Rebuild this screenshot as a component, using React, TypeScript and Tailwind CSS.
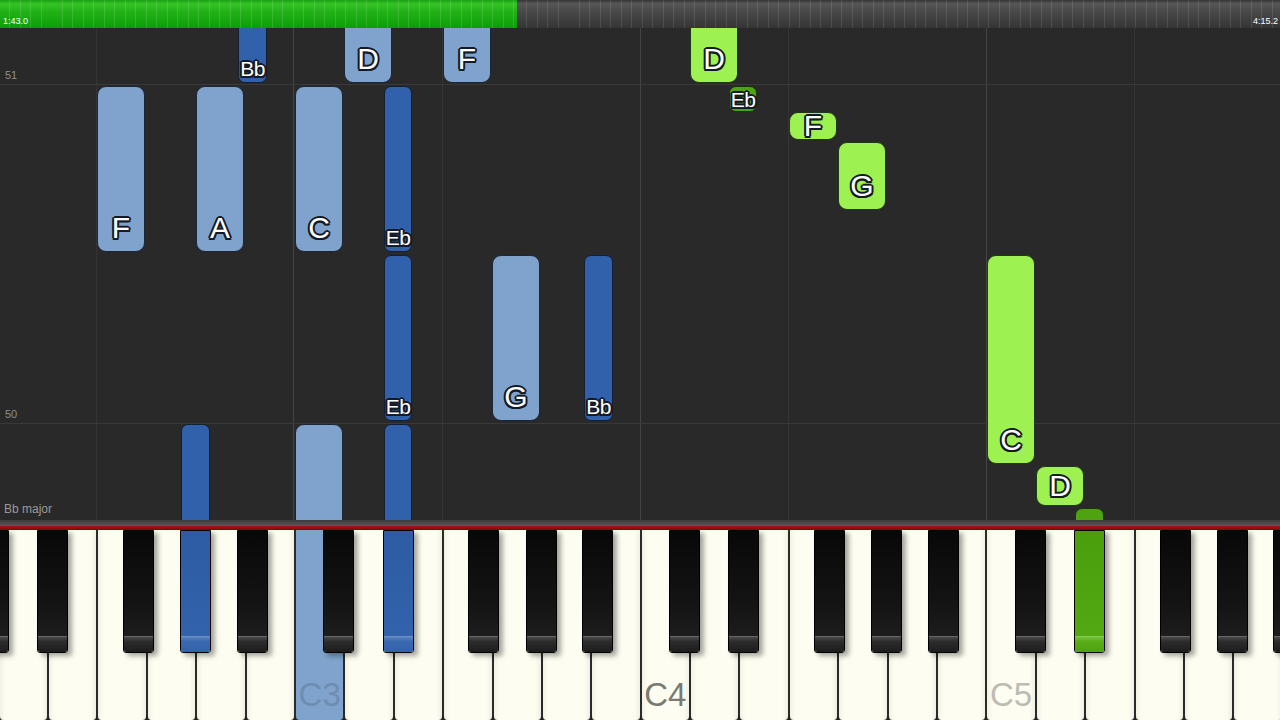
import React from 'react';

type Kind = 'lb' | 'db' | 'lg' | 'dg';

interface Note {
  x: number;
  top: number;
  bottom: number;
  w: number;
  kind: Kind;
  label?: string;
}

// page coordinates, the roll starts at y = 28
const NOTES: Note[] = [
  { x: 238, top: 10, bottom: 83, w: 29, kind: 'db', label: 'Bb' },
  { x: 344, top: 10, bottom: 83, w: 48, kind: 'lb', label: 'D' },
  { x: 443, top: 10, bottom: 83, w: 48, kind: 'lb', label: 'F' },
  { x: 690, top: 10, bottom: 83, w: 48, kind: 'lg', label: 'D' },
  { x: 97, top: 86, bottom: 252, w: 48, kind: 'lb', label: 'F' },
  { x: 196, top: 86, bottom: 252, w: 48, kind: 'lb', label: 'A' },
  { x: 295, top: 86, bottom: 252, w: 48, kind: 'lb', label: 'C' },
  { x: 384, top: 86, bottom: 252, w: 28, kind: 'db', label: 'Eb' },
  { x: 729, top: 86, bottom: 112, w: 28, kind: 'dg', label: 'Eb' },
  { x: 789, top: 112, bottom: 140, w: 48, kind: 'lg', label: 'F' },
  { x: 838, top: 142, bottom: 210, w: 48, kind: 'lg', label: 'G' },
  { x: 384, top: 255, bottom: 421, w: 28, kind: 'db', label: 'Eb' },
  { x: 492, top: 255, bottom: 421, w: 48, kind: 'lb', label: 'G' },
  { x: 584, top: 255, bottom: 421, w: 29, kind: 'db', label: 'Bb' },
  { x: 987, top: 255, bottom: 464, w: 48, kind: 'lg', label: 'C' },
  { x: 1036, top: 466, bottom: 506, w: 48, kind: 'lg', label: 'D' },
  { x: 181, top: 424, bottom: 540, w: 29, kind: 'db' },
  { x: 295, top: 424, bottom: 540, w: 48, kind: 'lb' },
  { x: 384, top: 424, bottom: 540, w: 28, kind: 'db' },
  { x: 1075, top: 508, bottom: 540, w: 29, kind: 'dg' },
];

const NOTE_STYLE: Record<Kind, string> = {
  lb: 'bg-[#7fa3cd] border-[#1b2636]',
  db: 'bg-[#3161aa] border-[#141f33]',
  lg: 'bg-[#9df151] border-[#22361a]',
  dg: 'bg-[#4fa311] border-[#1c330c]',
};

const OUTLINE =
  '[text-shadow:-1.5px_-1.5px_0_#141a26,1.5px_-1.5px_0_#141a26,-1.5px_1.5px_0_#141a26,1.5px_1.5px_0_#141a26,0_-2px_0_#141a26,0_2px_0_#141a26,-2px_0_0_#141a26,2px_0_0_#141a26]';

const V_LINES = [
  { x: 96, strong: false },
  { x: 293, strong: true },
  { x: 442, strong: false },
  { x: 640, strong: true },
  { x: 788, strong: false },
  { x: 986, strong: true },
  { x: 1134, strong: false },
];

const KEY_W = 49.38;
const WHITE = ['D2', 'E2', 'F2', 'G2', 'A2', 'B2', 'C3', 'D3', 'E3', 'F3', 'G3', 'A3', 'B3', 'C4', 'D4', 'E4', 'F4', 'G4', 'A4', 'B4', 'C5', 'D5', 'E5', 'F5', 'G5', 'A5'];
const BLACK_OFFSET: Record<string, number> = { C: -6, D: 4, F: -9, G: -1, A: 6 };

type Hl = 'none' | 'blue' | 'green';
const BLACK_HL: Record<string, Hl> = { G2: 'blue', D3: 'blue', D5: 'green' };

// black keys: boundary index (right edge of a white key) + offset
const BLACK_KEYS: { left: number; hl: Hl }[] = [{ left: 0 * KEY_W + BLACK_OFFSET.C - 15, hl: 'none' }];
WHITE.forEach((name, i) => {
  const pc = name[0];
  if (BLACK_OFFSET[pc] !== undefined) {
    BLACK_KEYS.push({ left: (i + 1) * KEY_W + BLACK_OFFSET[pc] - 15, hl: BLACK_HL[name] ?? 'none' });
  }
});

const BLACK_BODY: Record<Hl, string> = {
  none: 'bg-[linear-gradient(#080808,#141414_70%,#1d1d1d)]',
  blue: 'bg-[linear-gradient(#2d5ca4,#3262ab)]',
  green: 'bg-[linear-gradient(#4a9e0c,#52a913)]',
};
const BLACK_LIP: Record<Hl, string> = {
  none: 'bg-[linear-gradient(#4a4a4a,#2c2c2c_30%,#1c1c1c)] border-[#666]',
  blue: 'bg-[linear-gradient(#5a82c0,#3a69b0_30%,#3162aa)] border-[#6f92c8]',
  green: 'bg-[linear-gradient(#78c23c,#58ad18_30%,#4fa311)] border-[#86cc4c]',
};

const KEY_LABEL: Record<string, string> = {
  C3: 'text-[#6f8db2]',
  C4: 'text-[#7a7a72]',
  C5: 'text-[#bcbcb4]',
};

const NoteBox: React.FC<{ n: Note }> = ({ n }) => {
  const wide = n.w > 40;
  return (
    <div
      className={`absolute flex flex-col justify-end items-center border ${NOTE_STYLE[n.kind]} ${wide ? 'rounded-[9px]' : 'rounded-[7px]'}`}
      style={{ left: n.x, top: n.top - 28, width: n.w, height: n.bottom - n.top }}
    >
      {n.label && (
        <span
          className={`flex items-center justify-center max-h-full text-white leading-none ${OUTLINE} ${
            wide ? 'h-[47px] text-[30px]' : 'h-[27px] text-[21px] tracking-[-0.5px]'
          }`}
        >
          {n.label}
        </span>
      )}
    </div>
  );
};

const App: React.FC = () => {
  return (
    <div className="w-[1280px] h-[720px] overflow-hidden flex flex-col bg-[#292929] font-['Liberation_Sans',Arial,sans-serif]">
      {/* Timeline */}
      <div className="h-[28px] flex shrink-0">
        <div className="w-[517px] flex items-end pl-[3px] pb-[2px] [background-image:repeating-linear-gradient(90deg,transparent_0_9.5px,rgba(255,255,255,0.13)_9.5px_10.5px),linear-gradient(#1a9e12,#34c426_14%,#20b016_45%,#0b9e08)]">
          <span className="text-[9px] leading-none text-white">1:43.0</span>
        </div>
        <div className="flex-1 flex items-end justify-end pb-[2px] pr-[2px] [background-image:repeating-linear-gradient(90deg,transparent_0_9.5px,rgba(255,255,255,0.1)_9.5px_10.5px),linear-gradient(#333,#565656_12%,#474747_45%,#353535)]">
          <span className="text-[9px] leading-none text-white">4:15.2</span>
        </div>
      </div>

      {/* Piano roll */}
      <div className="relative h-[492px] shrink-0 overflow-hidden bg-[#292929]">
        {V_LINES.map((l) => (
          <div
            key={l.x}
            className={`absolute top-0 bottom-0 w-px ${l.strong ? 'bg-[#454545]' : 'bg-[#343434]'}`}
            style={{ left: l.x }}
          />
        ))}
        <div className="absolute left-0 right-0 top-[56px] h-px bg-[#393939]" />
        <div className="absolute left-0 right-0 top-[395px] h-px bg-[#393939]" />
        <span className="absolute left-[5px] top-[42px] text-[11px] leading-none text-[#8e8e8e]">51</span>
        <span className="absolute left-[5px] top-[381px] text-[11px] leading-none text-[#8e8e8e]">50</span>
        <span className="absolute left-[4px] top-[475px] text-[12px] leading-none text-[#9a9a9a]">Bb major</span>

        {NOTES.map((n, i) => (
          <NoteBox key={i} n={n} />
        ))}
      </div>

      {/* Keyboard edge */}
      <div className="h-[6px] shrink-0 bg-[linear-gradient(#3c3c3c,#575757)]" />
      <div className="h-[4px] shrink-0 bg-[linear-gradient(#b01414,#7a0808)]" />

      {/* Keyboard */}
      <div className="relative flex-1 overflow-hidden bg-[#1e1e1e]">
        <div className="relative flex h-full w-[1284px] ml-[-1.4px]">
          {WHITE.map((name) => (
            <div
              key={name}
              className={`flex-1 flex items-end justify-center pb-[9px] border-x-[0.75px] border-[#2a2a2a] rounded-b-[4px] ${
                name === 'C3' ? 'bg-[#7fa3cd]' : 'bg-[linear-gradient(90deg,#f2f2e4,#fdfdf1_12%,#fdfdf1_88%,#f0f0e2)]'
              }`}
            >
              {KEY_LABEL[name] && (
                <span className={`text-[33px] leading-none ${KEY_LABEL[name]}`}>{name}</span>
              )}
            </div>
          ))}
          {BLACK_KEYS.map((b, i) => (
            <div
              key={i}
              className="absolute top-0 h-[123px] w-[31px] flex flex-col border border-black rounded-b-[3px] shadow-[4px_3px_5px_rgba(0,0,0,0.35)]"
              style={{ left: b.left }}
            >
              <div className={`flex-1 ${BLACK_BODY[b.hl]}`} />
              <div className={`h-[16px] border-t rounded-b-[2px] ${BLACK_LIP[b.hl]}`} />
            </div>
          ))}
        </div>
      </div>
    </div>
  );
};

export default App;
